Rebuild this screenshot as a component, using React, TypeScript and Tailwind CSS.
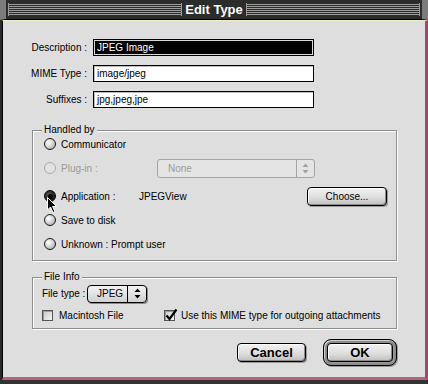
import React from 'react';

// Mac OS 8 style "Edit Type" dialog

type RadioState = 'off' | 'on' | 'disabled';

function Radio({ state }: { state: RadioState }) {
  if (state === 'disabled') {
    return <div className="w-3 h-3 shrink-0 rounded-full border border-[#a9a9a9] bg-[#e2e2e2]" />;
  }
  if (state === 'on') {
    return (
      <div className="w-3 h-3 shrink-0 rounded-full border border-black bg-[radial-gradient(circle_at_40%_40%,#5a5a5a_0%,#2a2a2a_55%,#000_100%)] flex items-center justify-center">
        <div className="w-[5px] h-[5px] rounded-full bg-black" />
      </div>
    );
  }
  return (
    <div className="w-3 h-3 shrink-0 rounded-full border border-[#1a1a1a] bg-[radial-gradient(circle_at_35%_35%,#ffffff_0%,#dcdcdc_40%,#9a9a9a_100%)]" />
  );
}

function Checkbox({ checked }: { checked?: boolean }) {
  return (
    <div className="relative w-[11px] h-[11px] shrink-0 border border-[#555] bg-[linear-gradient(135deg,#c8c8c8,#f4f4f4)] shadow-[inset_1px_1px_0_#999]">
      {checked && (
        <svg className="absolute -top-[3px] left-0" width="13" height="13" viewBox="0 0 13 13">
          <path d="M1.5 7.5 L4.5 11 L11.5 1.5" fill="none" stroke="#000" strokeWidth="2.2" />
        </svg>
      )}
    </div>
  );
}

function Arrows({ color }: { color: string }) {
  return (
    <svg width="7" height="11" viewBox="0 0 7 11">
      <path d="M3.5 0.5 L6.5 4 L0.5 4 Z" fill={color} />
      <path d="M3.5 10.5 L6.5 7 L0.5 7 Z" fill={color} />
    </svg>
  );
}

function Field({ value, selected }: { value: string; selected?: boolean }) {
  if (selected) {
    return (
      <div className="w-[221px] h-[17px] border border-black bg-black shadow-[inset_0_0_0_1px_#d8d8d8] flex items-center pl-[2px]">
        <span className="bg-black text-white leading-[13px] px-px">{value}</span>
      </div>
    );
  }
  return (
    <div className="w-[221px] h-[17px] border border-black bg-white shadow-[inset_1px_1px_0_#bdbdbd] flex items-center pl-[3px]">
      <span className="leading-[13px]">{value}</span>
    </div>
  );
}

function Group({ label, className, children }: { label: string; className: string; children: React.ReactNode }) {
  return (
    <div className={`relative border border-[#8e8e8e] shadow-[1px_1px_0_#ffffff,inset_1px_1px_0_#ffffff] ${className}`}>
      <span className="absolute -top-[8px] left-[9px] px-[2px] bg-[#dedede] leading-[14px]">{label}</span>
      {children}
    </div>
  );
}

function Button({ children, className }: { children: React.ReactNode; className: string }) {
  return (
    <div
      className={`rounded-[4px] border border-black bg-[linear-gradient(180deg,#f2f2f2_0%,#dcdcdc_60%,#bdbdbd_100%)] shadow-[inset_1px_1px_0_#ffffff,inset_-1px_-1px_0_#8a8a8a,1px_1px_0_#9a9a9a] flex items-center justify-center ${className}`}
    >
      {children}
    </div>
  );
}

function Stripes() {
  return (
    <div className="flex-1 h-[13px] flex flex-col justify-between border-l border-r border-[#9a9a9a] py-px">
      <div className="h-px bg-[#9c9c9c]" />
      <div className="h-px bg-[#9c9c9c]" />
      <div className="h-px bg-[#9c9c9c]" />
      <div className="h-px bg-[#9c9c9c]" />
      <div className="h-px bg-[#9c9c9c]" />
      <div className="h-px bg-[#9c9c9c]" />
    </div>
  );
}

export default function App() {
  return (
    <div className="w-[428px] h-[384px] bg-[#2a2a2a] flex flex-col text-[10px] text-black font-['Liberation_Sans',Arial,sans-serif] overflow-hidden">
      {/* Title bar */}
      <div className="h-[20px] shrink-0 flex items-center bg-[#2c2c2c] border-l-[6px] border-l-[#7c7c7c] border-r-[6px] border-r-[#7c7c7c] border-b border-b-black px-[2px]">
        <Stripes />
        <div className="px-[3px] text-white font-bold text-[13px] leading-[18px]">Edit Type</div>
        <Stripes />
      </div>

      {/* Body */}
      <div className="relative flex-1 ml-[2px] bg-[#dedede] border-l border-l-black border-t border-t-[#f1f1c6] border-r-[3px] border-r-[#a3486a] border-b-[3px] border-b-[#b8627f] flex flex-col pt-[18px] pl-[29px] pr-[28px]">
        {/* Text fields */}
        <div className="flex flex-col gap-[9px]">
          <div className="flex items-center">
            <span className="w-[59px] -ml-[3px] text-right pr-px">Description :</span>
            <div className="ml-[5px]">
              <Field value="JPEG Image" selected />
            </div>
          </div>
          <div className="flex items-center">
            <span className="w-[59px] -ml-[3px] text-right pr-px">MIME Type :</span>
            <div className="ml-[5px]">
              <Field value="image/jpeg" />
            </div>
          </div>
          <div className="flex items-center">
            <span className="w-[59px] -ml-[3px] text-right pr-px">Suffixes :</span>
            <div className="ml-[5px]">
              <Field value="jpg,jpeg,jpe" />
            </div>
          </div>
        </div>

        {/* Handled by */}
        <Group label="Handled by" className="mt-[22px] h-[131px] pl-[11px] pr-[9px] pt-px flex flex-col">
          <div className="h-[24px] flex items-center gap-[5px]">
            <Radio state="off" />
            <span>Communicator</span>
          </div>
          <div className="h-[24px] flex items-center gap-[5px]">
            <Radio state="disabled" />
            <span className="w-[91px] text-[#9a9a9a]">Plug-in :</span>
            <div className="w-[158px] h-[19px] rounded-[3px] border border-[#a5a5a5] bg-[#e4e4e4] flex items-center">
              <span className="flex-1 pl-[10px] text-[#9a9a9a]">None</span>
              <div className="w-[18px] h-full border-l border-[#a5a5a5] flex items-center justify-center">
                <Arrows color="#a0a0a0" />
              </div>
            </div>
          </div>
          <div className="mt-[4px] h-[24px] flex items-center gap-[5px]">
            <Radio state="on" />
            <span className="w-[73px]">Application :</span>
            <span>JPEGView</span>
            <Button className="ml-auto w-[80px] h-[19px]">
              <span>Choose...</span>
            </Button>
          </div>
          <div className="h-[24px] flex items-center gap-[5px]">
            <Radio state="off" />
            <span>Save to disk</span>
          </div>
          <div className="h-[24px] flex items-center gap-[5px]">
            <Radio state="off" />
            <span>Unknown : Prompt user</span>
          </div>
        </Group>

        {/* File Info */}
        <Group label="File Info" className="mt-[16px] h-[52px] pl-[9px] pt-[6px] flex flex-col">
          <div className="h-[19px] flex items-center">
            <span className="w-[45px]">File type :</span>
            <div className="w-[60px] h-[18px] rounded-[4px] border border-black bg-[linear-gradient(180deg,#f4f4f4,#d0d0d0)] shadow-[1px_1px_0_#8a8a8a] flex items-center">
              <span className="flex-1 pl-[9px]">JPEG</span>
              <div className="w-[19px] h-full border-l border-black flex items-center justify-center">
                <Arrows color="#000" />
              </div>
            </div>
          </div>
          <div className="mt-[3px] h-[18px] flex items-center">
            <Checkbox />
            <span className="ml-[6px] w-[105px]">Macintosh File</span>
            <Checkbox checked />
            <span className="ml-[6px]">Use this MIME type for outgoing attachments</span>
          </div>
        </Group>

        {/* Buttons */}
        <div className="mt-[10px] flex items-center justify-end gap-[17px]">
          <Button className="w-[69px] h-[19px]">
            <span className="font-bold text-[13px]">Cancel</span>
          </Button>
          <div className="rounded-[8px] border border-black bg-[#8c8c8c] p-[3px] shadow-[inset_1px_1px_0_#cfcfcf,1px_1px_0_#9a9a9a]">
            <Button className="w-[66px] h-[19px]">
              <span className="font-bold text-[13px]">OK</span>
            </Button>
          </div>
        </div>

        {/* Mouse pointer */}
        <svg className="absolute left-[44px] top-[176px]" width="11" height="17" viewBox="0 0 11 17">
          <path d="M0.5 0.5 L0.5 13 L3.5 10 L6 15.5 L8 14.5 L5.5 9.5 L9.5 9.5 Z" fill="#000" stroke="#fff" strokeWidth="1" />
        </svg>
      </div>
      <div className="h-[4px] shrink-0 bg-[#333]" />
    </div>
  );
}
